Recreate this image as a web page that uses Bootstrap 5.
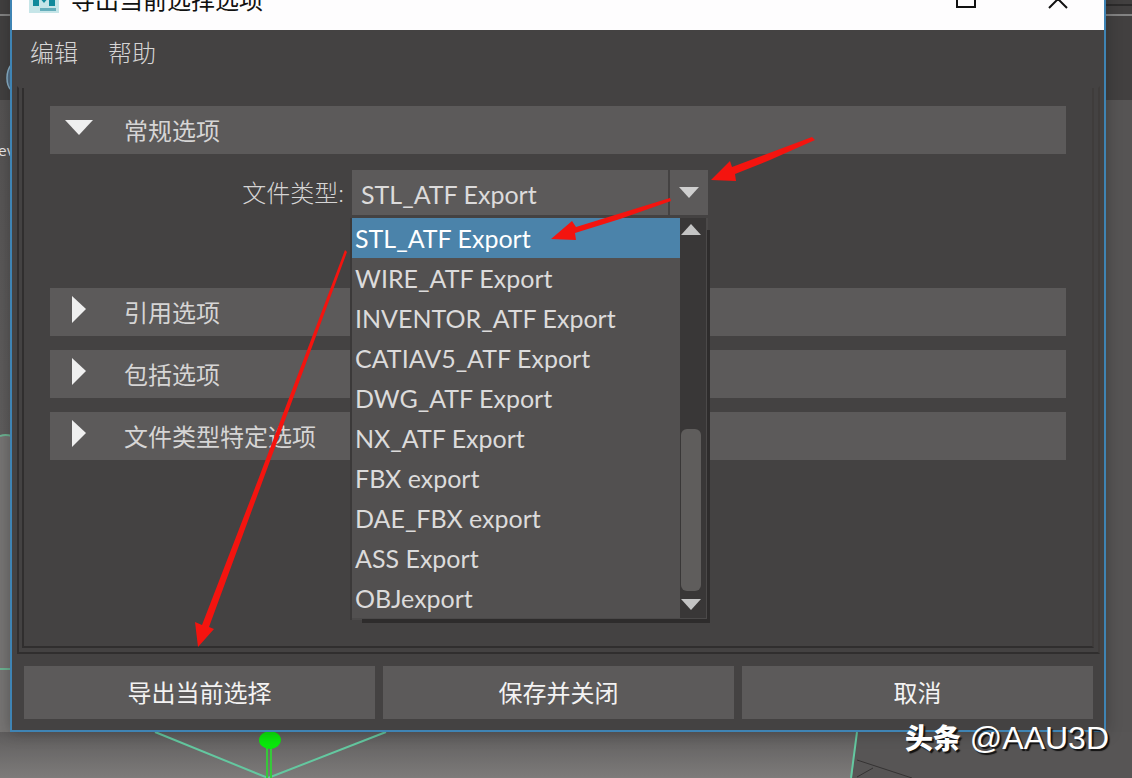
<!DOCTYPE html>
<html lang="zh-CN" data-bs-theme="dark">
<head>
<meta charset="utf-8">
<meta name="viewport" content="width=device-width, initial-scale=1">
<title>导出当前选择选项</title>
<link href="https://cdn.jsdelivr.net/npm/bootstrap@5.3.0/dist/css/bootstrap.min.css" rel="stylesheet">
<style>
  body { font-family: Lato, "Noto Sans CJK SC", sans-serif; font-size: 24px; line-height: 32px; color: #d6d5d5; background: #565454; }
  .scene { position: absolute; inset: 0; width: 100%; height: 100%; }
  .dialog-window { margin: -30px 26px 46px 10px; background: #444242; border: 2px solid #3f84b4; border-top: 0; box-shadow: 0 0 14px rgba(20,20,20,.35); }
  .title-strip { height: 60px; background: #fefdfe; color: #111; padding: 0 36px 0 17px; }
  .menu-strip { height: 56px; padding: 7px 18px 0; gap: 30px; }
  .menu-strip a { color: #d6d5d5; text-decoration: none; font-weight: 300; }
  .frame-outer { margin: 0 4px 0 5px; border: 2px solid #302e2e; border-top-color: transparent; border-right-color: #3f3c3b; padding: 0 4px 4px 3px; }
  .frame-inner { border: 2px solid #302e2e; border-top: 0; border-right-color: #3f3c3b; padding: 18px 26px 0 26px; }
  .section-head { display: flex; align-items: center; width: 100%; height: 48px; padding: 2px 14px 0; border: 0; background: #5c5a5a; color: #d6d5d5; text-align: left; }
  .section-head svg { width: 30px; height: 30px; margin: -8px 30px 0 0; fill: #efefef; }
  .type-row { padding: 16px 0 14px; min-height: 134px; }
  .type-label { width: 294px; height: 46px; line-height: 46px; font-weight: 300; }
  .type-picker { width: 356px; margin-left: 8px; }
  .type-select { display: block; width: 100%; height: 45px; padding: 2px 44px 0 9px; border: 0; border-radius: 0; appearance: none; background: linear-gradient(90deg, transparent 316px, #444242 316px, #444242 318px, transparent 318px) #5c5a5a; color: #dcdbdb; font-size: 25px; }
  .picker-arrow { position: absolute; right: 9px; top: 17px; pointer-events: none; }
  .type-menu { position: absolute; left: 0; top: 48px; z-index: 5; width: 356px; border: solid #4b4949; border-width: 0 2px 2px 0; background: #525050; box-shadow: -2px 0 #3b3939; }
  .type-menu::before { content: ""; position: absolute; z-index: -1; inset: 12px -4px -5px 10px; background: #2e2c2c; clip-path: polygon(calc(100% - 3px) 0, 100% 0, 100% 100%, 0 100%, 0 calc(100% - 4px), calc(100% - 3px) calc(100% - 4px)); }
  .type-menu button { height: 40px; padding: 3px; border: 0; background: #525050; color: #dcdbdb; text-align: left; font-size: 25px; line-height: 34px; white-space: nowrap; }
  .type-menu button[aria-selected=true] { background: #4b83aa; color: #fff; }
  .scroll-track { width: 26px; background: #393737; padding: 6px 4px 8px 1px; }
  .scroll-thumb { width: 20px; height: 162px; background: #5f5d5c; border-radius: 6px; }
  .action-row { gap: 8px; padding: 12px 11px 11px 12px; }
  .action-row button { flex: 1 1 0; height: 53px; border: 0; background: #5c5a5a; color: #f3f2f2; }
  .marks { position: absolute; left: 0; top: 0; z-index: 10; pointer-events: none; }
  .credit { position: absolute; right: 23px; bottom: 16px; z-index: 11; color: #fff; font-family: "Liberation Sans", "Noto Sans CJK SC", sans-serif; font-size: 32px; line-height: 44px; text-shadow: 2px 2px 1px #111; white-space: nowrap; }
  .credit b { font-size: 28px; font-weight: 900; }
</style>
</head>
<body class="position-relative min-vh-100 d-flex flex-column overflow-hidden">

<svg class="scene" viewBox="0 0 1132 778" preserveAspectRatio="none" aria-hidden="true">
  <defs>
    <linearGradient id="floor" x1="0" y1="0" x2="0" y2="1"><stop offset="0" stop-color="#5f5d5d"/><stop offset="1" stop-color="#7d7b7a"/></linearGradient>
    <linearGradient id="side" x1="0" y1="0" x2="0" y2="1"><stop offset="0" stop-color="#555353"/><stop offset="1" stop-color="#5f5d5d"/></linearGradient>
  </defs>
  <rect width="1132" height="100" fill="#424040"/>
  <path d="M0 15h12M1105 15h27" stroke="#999" stroke-width="1.5"/>
  <path d="M1105 5h27" stroke="#2c2b2b" stroke-width="2"/>
  <rect y="100" width="12" height="335" fill="url(#side)"/>
  <path d="M0 435h12v343H0z" fill="#777574"/>
  <path d="M0 436q5-2 12 0M0 669h12" stroke="#6db493" stroke-width="2" fill="none"/>
  <rect y="732" width="860" height="46" fill="url(#floor)"/>
  <path d="M857 732h275v46H852z" fill="#575555"/>
  <path d="M155 732 268 778 386 732M857 732 851 778" stroke="#64c8a0" stroke-width="2" fill="none"/>
  <path d="M857 760 912 778M857 777 873 768" stroke="#353333" fill="none"/>
  <path d="M267 745v33M271 745v33" stroke="#36c83a" stroke-width="2"/>
  <ellipse cx="270" cy="740" rx="11" ry="9" fill="#09e90b"/>
  <path d="M11 65q-4 5-4 13t4 12" fill="#53718a" stroke="#8db5ce" stroke-width="1.5"/>
  <text x="-2" y="156" fill="#eee" font-size="14" font-family="DejaVu Sans">ev</text>
</svg>

<main class="dialog-window position-relative flex-grow-1 d-flex flex-column">
  <header class="title-strip d-flex align-items-center">
    <svg width="30" height="30" viewBox="0 0 30 30" style="margin-top:-5px" aria-hidden="true">
      <rect width="30" height="30" fill="#c6e5e8"/>
      <path d="M4 4h6l5 8 5-8h6v19h-6v-9l-5 6-5-6v9H4z" fill="#10899b"/>
      <path d="M11 25h16v3H11z" fill="#65aebb"/>
    </svg>
    <span class="ms-2 ps-1">导出当前选择选项</span>
    <svg class="ms-auto" width="112" height="20" viewBox="0 0 112 20" fill="none" stroke="#111" stroke-width="2" aria-hidden="true">
      <path d="M1 1h18v16H1zM93 0l18 18M111 0 93 18"/>
    </svg>
  </header>

  <nav class="menu-strip d-flex align-items-start">
    <a href="#">编辑</a>
    <a href="#">帮助</a>
  </nav>

  <div class="frame-outer flex-grow-1 d-flex flex-column">
    <div class="frame-inner flex-grow-1">
      <button class="section-head" type="button" aria-expanded="true">
        <svg viewBox="0 0 30 30"><path d="M1 8h28L15 23z"/></svg>常规选项
      </button>
      <div class="type-row d-flex">
        <label class="type-label text-end" for="fileType">文件类型:</label>
        <div class="type-picker position-relative">
          <select class="type-select" id="fileType"><option>STL_ATF Export</option></select>
          <svg class="picker-arrow" width="20" height="11" viewBox="0 0 20 11" fill="#cfcfcf"><path d="M0 0h20L10 11z"/></svg>
          <div class="type-menu d-flex">
            <div class="d-flex flex-column flex-grow-1" role="listbox" aria-label="文件类型">
              <button type="button" role="option" aria-selected="true">STL_ATF Export</button>
              <button type="button" role="option">WIRE_ATF Export</button>
              <button type="button" role="option">INVENTOR_ATF Export</button>
              <button type="button" role="option">CATIAV5_ATF Export</button>
              <button type="button" role="option">DWG_ATF Export</button>
              <button type="button" role="option">NX_ATF Export</button>
              <button type="button" role="option">FBX export</button>
              <button type="button" role="option">DAE_FBX export</button>
              <button type="button" role="option">ASS Export</button>
              <button type="button" role="option">OBJexport</button>
            </div>
            <div class="scroll-track d-flex flex-column">
              <svg width="20" height="11" viewBox="0 0 20 11" fill="#c4c4c4"><path d="M0 11h20L10 0z"/></svg>
              <div class="scroll-thumb mt-auto mb-2"></div>
              <svg width="20" height="11" viewBox="0 0 20 11" fill="#c4c4c4"><path d="M0 0h20L10 11z"/></svg>
            </div>
          </div>
        </div>
      </div>
      <div class="d-flex flex-column" style="gap:14px">
        <button class="section-head" type="button" aria-expanded="false"><svg viewBox="0 0 30 30"><path d="M8 2v27l14-14z"/></svg>引用选项</button>
        <button class="section-head" type="button" aria-expanded="false"><svg viewBox="0 0 30 30"><path d="M8 2v27l14-14z"/></svg>包括选项</button>
        <button class="section-head" type="button" aria-expanded="false"><svg viewBox="0 0 30 30"><path d="M8 2v27l14-14z"/></svg>文件类型特定选项</button>
      </div>
    </div>
  </div>

  <footer class="action-row d-flex">
    <button type="button">导出当前选择</button>
    <button type="button">保存并关闭</button>
    <button type="button">取消</button>
  </footer>
</main>

<svg class="marks" width="1132" height="778" viewBox="0 0 1132 778" fill="#f4140f" aria-hidden="true">
  <path d="M812 137 732 167 730 161 711 180 736 181 735 174 770 160 815 140z"/>
  <path d="M670 198 576 227 572 221 551 239 576 240 575 233 620 219 671 201z"/>
  <path d="M345 250 258 480 202 625 195 622 198 647 214 629 209 627 263 480 347 252z"/>
</svg>
<div class="credit"><b>头条</b> @AAU3D</div>

<script src="https://cdn.jsdelivr.net/npm/bootstrap@5.3.0/dist/js/bootstrap.bundle.min.js"></script>
</body>
</html>
